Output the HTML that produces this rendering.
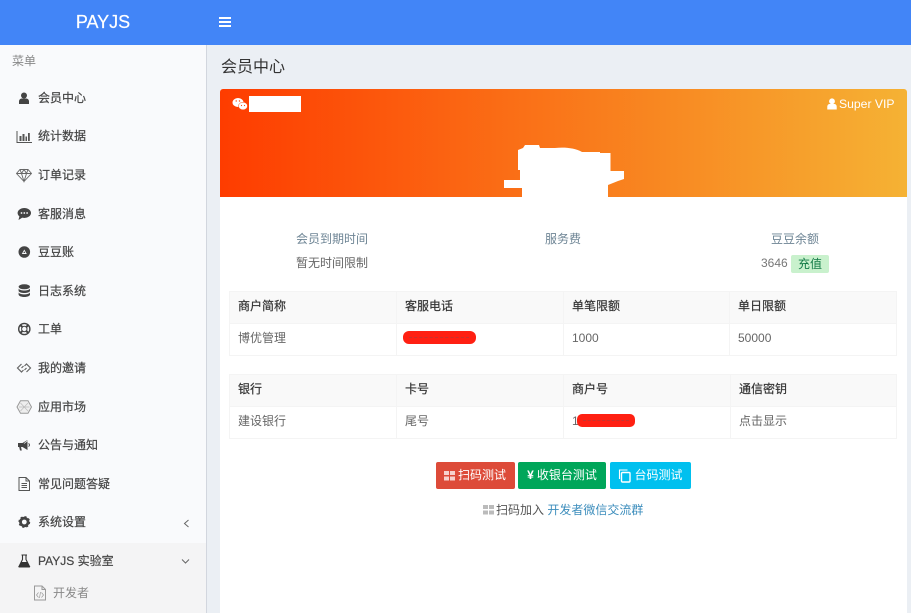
<!DOCTYPE html>
<html><head><meta charset="utf-8">
<style>
html,body{margin:0;padding:0;width:911px;height:613px;overflow:hidden;background:#ebeff4;font-family:"Liberation Sans","Noto Sans CJK SC",sans-serif;font-size:12px;color:#555}
body{position:relative}
.a{position:absolute;white-space:nowrap}
.m{position:absolute;left:38px;font-size:12px;line-height:16px;color:#444;-webkit-text-stroke:.2px #444;white-space:nowrap}
.i{position:absolute;left:16px;width:16px;height:16px;overflow:visible}
.th,.td{position:absolute;line-height:16px;white-space:nowrap;font-size:12px}
.th{color:#333;-webkit-text-stroke:.2px #333}
.td{color:#666}
.ln{position:absolute;background:#f4f4f4}
.btn{position:absolute;top:462px;height:27px;border-radius:2px;color:#fff;font-size:12px;line-height:27px;text-align:center;white-space:nowrap}
.dash{position:absolute;height:0;border-top:1px dashed rgba(150,70,70,.55)}
</style></head><body>
<div class="a" style="left:0;top:0;width:911px;height:45px;background:#4285f7"></div>
<div class="a" style="left:0;top:0;width:206px;height:45px;line-height:44px;text-align:center;color:#fff;font-size:18px;-webkit-text-stroke:.2px #fff">PAYJS</div>
<svg class="a" style="left:219px;top:17px" width="12" height="11"><rect y="0" width="12" height="2" fill="#fff"/><rect y="4" width="12" height="2" fill="#fff"/><rect y="8" width="12" height="2" fill="#fff"/></svg>

<div class="a" style="left:0;top:45px;width:206px;height:568px;background:#f9fafc;border-right:1px solid #d2d6de"></div>
<div class="a" style="left:0;top:543px;width:206px;height:70px;background:#f4f4f5"></div>
<div class="a" style="left:12px;top:53px;color:#888;font-size:12px;line-height:16px">菜单</div>

<div class="m" style="top:90px">会员中心</div>
<div class="m" style="top:128px">统计数据</div>
<div class="m" style="top:167px">订单记录</div>
<div class="m" style="top:206px">客服消息</div>
<div class="m" style="top:244px">豆豆账</div>
<div class="m" style="top:283px">日志系统</div>
<div class="m" style="top:321px">工单</div>
<div class="m" style="top:360px">我的邀请</div>
<div class="m" style="top:399px">应用市场</div>
<div class="m" style="top:437px">公告与通知</div>
<div class="m" style="top:476px">常见问题答疑</div>
<div class="m" style="top:514px">系统设置</div>
<div class="m" style="top:553px">PAYJS 实验室</div>
<div class="a" style="left:53px;top:585px;color:#888;line-height:16px">开发者</div>

<!-- user -->
<svg class="i" style="top:91px" viewBox="0 0 16 16"><circle cx="8" cy="4.500" r="3" fill="#444"/><path d="M3 13V10.500c0-2 1.500-3 3-3h4c1.500 0 3 1 3 3V13z" fill="#444"/></svg>
<!-- chart -->
<svg class="i" style="top:128px" viewBox="0 0 16 16"><path d="M1 3v11.500h15" fill="none" stroke="#555"/><path d="M3.500 8h2v5h-2zM6.500 6h2v7h-2zM9.500 8.500h1.500V13H9.500zM12 5h1.800v8H12z" fill="#555"/></svg>
<!-- diamond -->
<svg class="i" style="top:167px" viewBox="0 0 16 16"><path d="M4 2.500h8l3.500 4L8 14.500.5 6.500zM.5 6.500h15M5.500 6.500L8 14.500l2.500-8M4 2.500l1.500 4L8 2.500l2.500 4 1.500-4" fill="none" stroke="#666" stroke-width=".9"/></svg>
<!-- comment -->
<svg class="i" style="top:206px" viewBox="0 0 16 16"><ellipse cx="8.300" cy="7" rx="6.700" ry="5" fill="#444"/><path d="M3.500 10l-1 4 4-2.500z" fill="#444"/><circle cx="5.500" cy="7" r=".9" fill="#f9fafc"/><circle cx="8.300" cy="7" r=".9" fill="#f9fafc"/><circle cx="11.100" cy="7" r=".9" fill="#f9fafc"/></svg>
<!-- circle -->
<svg class="i" style="top:244px" viewBox="0 0 16 16"><circle cx="8.300" cy="8" r="5.800" fill="#444"/><path d="M5.800 10H10.800L8.300 5.500zM7.300 9h2L8.300 7.200z" fill="#f9fafc" fill-rule="evenodd"/></svg>
<!-- database -->
<svg class="i" style="top:283px" viewBox="0 0 16 16"><ellipse cx="8.300" cy="3.800" rx="5.700" ry="2.500" fill="#444"/><path d="M2.600 5.500c1 2.700 10.400 2.700 11.400 0v2.500c-1 2.700-10.400 2.700-11.400 0zM2.600 9.400c1 2.700 10.400 2.700 11.400 0v2.400c-1 3-10.400 3-11.400 0z" fill="#444"/></svg>
<!-- lifebuoy -->
<svg class="i" style="top:321px" viewBox="0 0 16 16"><circle cx="8.300" cy="8" r="5.600" fill="none" stroke="#444" stroke-width="1.400"/><circle cx="8.300" cy="8" r="2.700" fill="none" stroke="#444"/><path d="M4.300 4l2 2M12.300 4l-2 2M4.300 12l2-2M12.300 12l-2-2" stroke="#444" stroke-width="2"/></svg>
<!-- invite -->
<svg class="i" style="top:360px" viewBox="0 0 16 16"><path d="M5.500 4L1.500 8l4 4 2-2M10.500 12l4-4-4-4-2 2M5.500 8l2-2M10.500 8l-2 2" fill="none" stroke="#666" stroke-width="1.200"/></svg>
<!-- hex -->
<svg class="i" style="top:399px" viewBox="0 0 16 16"><path d="M4.500 1.800h7.500l3.500 6.200-3.500 6.200H4.500L1 8z" fill="#eee" stroke="#999"/><path d="M4.500 4l7.500 8M12 4l-7.500 8M3 8h10.500" stroke="#bbb" stroke-width=".7"/></svg>
<!-- bullhorn -->
<svg class="i" style="top:437px" viewBox="0 0 16 16"><path d="M2 6h4.500v4H5l.8 3.500H4L3.200 10H2z" fill="#444"/><path d="M6.500 6l5-3v10l-5-3z" fill="#444"/><path d="M8 6.500l4-3v9" fill="none" stroke="#f9fafc" stroke-width=".7"/><path d="M12.500 6.500c1.300.5 1.300 2.500 0 3" fill="none" stroke="#444"/></svg>
<!-- doc -->
<svg class="i" style="top:476px" viewBox="0 0 16 16"><path d="M3 1.500h7l3.500 3.500v9.500H3zM10 1.500V5h3.500M5.500 7.500h5.500M5.500 9.500h5.500M5.500 11.500h5.500" fill="none" stroke="#555"/></svg>
<!-- gear -->
<svg class="i" style="top:514px" viewBox="0 0 16 16"><circle cx="8.300" cy="8" r="3.800" fill="none" stroke="#444" stroke-width="2.800"/><circle cx="8.300" cy="8" r="5" fill="none" stroke="#444" stroke-width="1.800" stroke-dasharray="2 1.930"/></svg>
<!-- flask -->
<svg class="i" style="top:553px" viewBox="0 0 16 16"><path d="M5.500 2h5.500M6.500 2.500v4L3 13.500h10.500L10 6.500v-4" fill="none" stroke="#333" stroke-width="1.100"/><path d="M5.500 9h5.500L14 14.500H2.500z" fill="#333"/></svg>
<!-- sub doc -->
<svg class="a" style="left:33px;top:585px" width="14" height="16" viewBox="0 0 14 16"><path d="M1.500 1h7.500l3.500 3.500v10.500h-11zM9 1v3.500h3.500" fill="none" stroke="#999"/><path d="M5.500 7.500l-2 2.500 2 2.500M8.500 7.500l2 2.500-2 2.500M7.500 7l-1 6" fill="none" stroke="#999" stroke-width=".7"/></svg>
<!-- chevrons -->
<svg class="a" style="left:183px;top:519px" width="7" height="9"><path d="M5.500 1L1.500 4.500 5.500 8" fill="none" stroke="#666"/></svg>
<svg class="a" style="left:181px;top:558px" width="9" height="7"><path d="M1 1.500L4.500 5 8 1.500" fill="none" stroke="#666"/></svg>

<div class="a" style="left:221px;top:57px;font-size:16px;line-height:22px;color:#333">会员中心</div>

<!-- card -->
<div class="a" style="left:220px;top:89px;width:687px;height:524px;background:#fff;border-radius:3px 3px 0 0"></div>
<div class="a" style="left:220px;top:89px;width:687px;height:108px;background:linear-gradient(to right,#fe3c00,#f5b234);border-radius:3px 3px 0 0"></div>
<svg class="a" style="left:232px;top:97px" width="16" height="14" viewBox="0 0 16 14"><ellipse cx="6" cy="5.500" rx="5.500" ry="4.500" fill="#fff"/><ellipse cx="11" cy="9" rx="4.500" ry="3.800" fill="#fff" stroke="#fb5010" stroke-width=".5"/><circle cx="4.200" cy="4" r=".7" fill="#fb5010"/><circle cx="7.500" cy="4" r=".7" fill="#fb5010"/><circle cx="9.500" cy="8.500" r=".6" fill="#fb5010"/><circle cx="12.500" cy="8.500" r=".6" fill="#fb5010"/></svg>
<div class="a" style="left:249px;top:96px;width:52px;height:16px;background:#fff"></div>
<svg class="a" style="left:827px;top:98px" width="10" height="12" viewBox="0 0 11 13"><circle cx="5.500" cy="3.500" r="3.200" fill="#fff"/><path d="M.3 12.500V9.500c0-2 1.500-3 2.500-3h5.400c1 0 2.500 1 2.500 3v3z" fill="#fff"/></svg>
<div class="a" style="left:839px;top:96px;color:#fff;font-size:12.200px;line-height:16px">Super VIP</div>
<!-- redacted avatar -->
<svg class="a" style="left:490px;top:135px" width="150" height="62" viewBox="0 0 150 62"><path d="M28 15L33 13 35 10H49L50 13H65C75 12 85 13 92 17H110V18H120.500V36H134V44L128 46 123 48 118 50V62H32V53H14V45H30V35H28Z" fill="#fff"/></svg>

<!-- stats -->
<div class="a" style="left:296px;top:231px;color:#6d8494;line-height:16px">会员到期时间</div>
<div class="a" style="left:296px;top:255px;color:#666;line-height:16px">暂无时间限制</div>
<div class="a" style="left:545px;top:231px;color:#6d8494;line-height:16px">服务费</div>
<div class="a" style="left:771px;top:231px;color:#6d8494;line-height:16px">豆豆余额</div>
<div class="a" style="left:761px;top:255px;color:#777;line-height:16px">3646</div>
<div class="a" style="left:791px;top:255px;width:38px;height:18px;line-height:18px;text-align:center;background:#c9f1cd;border-radius:2px;color:#117a45">充值</div>

<!-- table 1 -->
<div class="a" style="left:229px;top:291px;width:667px;height:32px;background:#f9f9f9"></div>
<div class="ln" style="left:229px;top:291px;width:668px;height:1px"></div>
<div class="ln" style="left:229px;top:323px;width:668px;height:1px"></div>
<div class="ln" style="left:229px;top:355px;width:668px;height:1px"></div>
<div class="ln" style="left:229px;top:291px;width:1px;height:65px"></div>
<div class="ln" style="left:396px;top:291px;width:1px;height:65px"></div>
<div class="ln" style="left:563px;top:291px;width:1px;height:65px"></div>
<div class="ln" style="left:729px;top:291px;width:1px;height:65px"></div>
<div class="ln" style="left:896px;top:291px;width:1px;height:65px"></div>
<div class="th" style="left:238px;top:298px">商户简称</div>
<div class="th" style="left:405px;top:298px">客服电话</div>
<div class="th" style="left:572px;top:298px">单笔限额</div>
<div class="th" style="left:738px;top:298px">单日限额</div>
<div class="td" style="left:238px;top:330px">博优管理</div>
<div class="a" style="left:403px;top:331px;width:73px;height:13px;background:#ff2012;border-radius:6px"></div>
<div class="dash" style="left:409px;top:337px;width:60px"></div>
<div class="td" style="left:572px;top:330px">1000</div>
<div class="td" style="left:738px;top:330px">50000</div>

<!-- table 2 -->
<div class="a" style="left:229px;top:374px;width:667px;height:32px;background:#f9f9f9"></div>
<div class="ln" style="left:229px;top:374px;width:668px;height:1px"></div>
<div class="ln" style="left:229px;top:406px;width:668px;height:1px"></div>
<div class="ln" style="left:229px;top:438px;width:668px;height:1px"></div>
<div class="ln" style="left:229px;top:374px;width:1px;height:65px"></div>
<div class="ln" style="left:396px;top:374px;width:1px;height:65px"></div>
<div class="ln" style="left:563px;top:374px;width:1px;height:65px"></div>
<div class="ln" style="left:730px;top:374px;width:1px;height:65px"></div>
<div class="ln" style="left:896px;top:374px;width:1px;height:65px"></div>
<div class="th" style="left:238px;top:381px">银行</div>
<div class="th" style="left:405px;top:381px">卡号</div>
<div class="th" style="left:572px;top:381px">商户号</div>
<div class="th" style="left:739px;top:381px">通信密钥</div>
<div class="td" style="left:238px;top:413px">建设银行</div>
<div class="td" style="left:405px;top:413px">尾号</div>
<div class="td" style="left:572px;top:413px">1</div>
<div class="a" style="left:577px;top:414px;width:58px;height:13px;background:#ff2012;border-radius:5px"></div>
<div class="dash" style="left:583px;top:420px;width:46px"></div>
<div class="td" style="left:739px;top:413px">点击显示</div>

<!-- buttons -->
<div class="btn" style="left:436px;width:79px;background:#dd4b39"><span style="margin-left:13px">扫码测试</span></div>
<svg class="a" style="left:444px;top:471px" width="11" height="10" viewBox="0 0 11 10" fill="#fff" fill-opacity=".75"><rect x="0" y="0" width="5" height="4"/><rect x="6" y="0" width="5" height="4"/><rect x="0" y="5.500" width="5" height="4"/><rect x="6" y="5.500" width="5" height="4"/></svg>
<div class="btn" style="left:518px;width:88px;background:#00a65a"><span style="font-weight:bold;margin-right:3px">¥</span>收银台测试</div>
<div class="btn" style="left:610px;width:81px;background:#00c0ef"><span style="margin-left:16px">台码测试</span></div>
<svg class="a" style="left:618px;top:469px" width="13" height="14" viewBox="0 0 13 14" fill="none" stroke="#fff"><rect x="3.500" y="3.500" width="8.500" height="9.500" rx="1" stroke-width="1.400"/><path d="M9.500 1H1.500v9" stroke-width="1.100"/></svg>

<svg class="a" style="left:483px;top:505px" width="11" height="10" viewBox="0 0 11 10" fill="#bbb"><rect x="0" y="0" width="5" height="4"/><rect x="6" y="0" width="5" height="4"/><rect x="0" y="5.500" width="5" height="4"/><rect x="6" y="5.500" width="5" height="4"/></svg>
<div class="a" style="left:496px;top:502px;line-height:16px;color:#555">扫码加入 <span style="color:#3c8dbc">开发者微信交流群</span></div>
</body></html>
